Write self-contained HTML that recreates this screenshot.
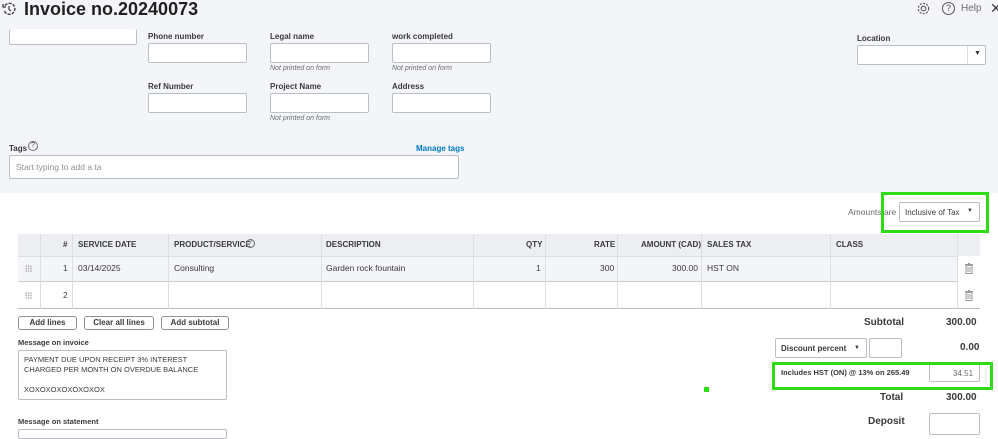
<!DOCTYPE html>
<html><head><meta charset="utf-8"><style>
*{box-sizing:border-box;margin:0;padding:0}
body{width:998px;height:433px;overflow:hidden;position:relative;background:#fff;font-family:"Liberation Sans",sans-serif;color:#393a3d}
.a{position:absolute}
.top{left:0;top:0;width:998px;height:193px;background:#f4f5f8}
.inp{position:absolute;background:#fff;border:1px solid #babec5;border-radius:2px}
.lbl{position:absolute;font-size:8px;font-weight:bold;color:#393a3d}
.np{position:absolute;font-size:7px;font-style:italic;color:#6b6c72}
.th{position:absolute;font-size:8px;font-weight:bold;top:240px}
.td{position:absolute;font-size:8.5px;top:263px}
.vl{position:absolute;width:1px;background:#dcdee2;top:234px;height:75px}
.btn{position:absolute;top:316px;height:14px;border:1px solid #8d9096;border-radius:3px;font-size:8px;font-weight:bold;text-align:center;line-height:12px;background:#fff}
.g{position:absolute;border:3px solid #2ddc12}
.dots{position:absolute;width:7px;height:7px;background:radial-gradient(circle,#999 0.6px,transparent 0.8px) 0 0/2.4px 2.4px}
</style></head><body>
<div class="a top"></div>
<svg class="a" style="left:2px;top:2px" width="14" height="14" viewBox="0 0 14 14"><path d="M3 3.5A5.5 5.5 0 1 1 2 8" fill="none" stroke="#393a3d" stroke-width="1.4" stroke-dasharray="3 1.2"/><path d="M1 2v3h3" fill="none" stroke="#393a3d" stroke-width="1.3"/><path d="M7 4v3.5l2 1.5" fill="none" stroke="#393a3d" stroke-width="1.2"/></svg>
<div class="a" style="left:24px;top:-1px;font-size:18px;font-weight:bold;color:#222">Invoice no.20240073</div>
<svg class="a" style="left:916px;top:1px" width="15" height="15" viewBox="0 0 16 16"><circle cx="8" cy="8" r="2.5" fill="none" stroke="#555" stroke-width="1.2"/><circle cx="8" cy="8" r="5.5" fill="none" stroke="#555" stroke-width="1.2" stroke-dasharray="2.2 1.4"/></svg>
<div class="a" style="left:942px;top:2px;width:13px;height:13px;border:1.3px solid #555;border-radius:50%;font-size:9px;text-align:center;line-height:11px;color:#555">?</div>
<div class="a" style="left:961px;top:3px;font-size:10px;color:#6b6c72">Help</div>
<div class="a" style="left:990px;top:0px;font-size:14px;color:#393a3d">✕</div>

<div class="inp" style="left:9px;top:29px;width:128px;height:16px;border-top:none"></div>
<div class="lbl" style="left:148px;top:32px">Phone number</div>
<div class="inp" style="left:148px;top:43px;width:99px;height:20px"></div>
<div class="lbl" style="left:270px;top:32px">Legal name</div>
<div class="inp" style="left:270px;top:43px;width:99px;height:20px"></div>
<div class="np" style="left:270px;top:65px">Not printed on form</div>
<div class="lbl" style="left:392px;top:32px">work completed</div>
<div class="inp" style="left:392px;top:43px;width:99px;height:20px"></div>
<div class="np" style="left:392px;top:65px">Not printed on form</div>
<div class="lbl" style="left:148px;top:82px">Ref Number</div>
<div class="inp" style="left:148px;top:93px;width:99px;height:20px"></div>
<div class="lbl" style="left:270px;top:82px">Project Name</div>
<div class="inp" style="left:270px;top:93px;width:99px;height:20px"></div>
<div class="np" style="left:270px;top:115px">Not printed on form</div>
<div class="lbl" style="left:392px;top:82px">Address</div>
<div class="inp" style="left:392px;top:93px;width:99px;height:20px"></div>
<div class="lbl" style="left:857px;top:34px">Location</div>
<div class="inp" style="left:857px;top:45px;width:129px;height:20px"></div>
<div class="a" style="left:967px;top:46px;width:1px;height:18px;background:#dcdee2"></div>
<div class="a" style="left:974px;top:50px;font-size:7px">▼</div>

<div class="lbl" style="left:9px;top:144px">Tags</div>
<div class="a" style="left:28px;top:141px;width:10px;height:10px;border:1px solid #6b6c72;border-radius:50%;font-size:7px;text-align:center;line-height:8px">?</div>
<div class="a" style="left:416px;top:144px;font-size:8px;font-weight:bold;color:#0077c5">Manage tags</div>
<div class="inp" style="left:9px;top:155px;width:450px;height:24px"></div>
<div class="a" style="left:16px;top:162px;font-size:8.5px;color:#8d9096">Start typing to add a ta</div>

<div class="a" style="left:848px;top:207px;font-size:8.5px;color:#6b6c72">Amounts are</div>
<div class="inp" style="left:899px;top:202px;width:81px;height:20px"></div>
<div class="a" style="left:905px;top:208px;font-size:8px">Inclusive of Tax</div>
<div class="a" style="left:967px;top:208px;font-size:6px">▼</div>
<div class="g" style="left:881px;top:192px;width:108px;height:41px"></div>

<div class="a" style="left:18px;top:234px;width:962px;height:22px;background:#eceef1"></div>
<div class="a" style="left:18px;top:256px;width:939px;height:26px;background:#f4f5f8;border-top:1px solid #dcdee2;border-bottom:1px solid #c9ccd1"></div>
<div class="a" style="left:18px;top:308px;width:962px;height:1px;background:#b8bbc1"></div>
<div class="vl" style="left:40px"></div><div class="vl" style="left:72px"></div><div class="vl" style="left:168px"></div><div class="vl" style="left:321px"></div><div class="vl" style="left:473px"></div><div class="vl" style="left:545px"></div><div class="vl" style="left:617px"></div><div class="vl" style="left:701px"></div><div class="vl" style="left:830px"></div><div class="vl" style="left:957px"></div>
<div class="th" style="left:63px">#</div>
<div class="th" style="left:78px">SERVICE DATE</div>
<div class="th" style="left:174px">PRODUCT/SERVICE</div>
<div class="a" style="left:246px;top:239px;width:9px;height:9px;border:1px solid #6b6c72;border-radius:50%;font-size:6px;text-align:center;line-height:7px;color:#6b6c72">?</div>
<div class="th" style="left:326px">DESCRIPTION</div>
<div class="th" style="left:526px">QTY</div>
<div class="th" style="left:594px">RATE</div>
<div class="th" style="left:641px">AMOUNT (CAD)</div>
<div class="th" style="left:707px">SALES TAX</div>
<div class="th" style="left:836px">CLASS</div>
<div class="dots" style="left:25px;top:265px"></div>
<div class="td" style="left:63px">1</div>
<div class="td" style="left:78px">03/14/2025</div>
<div class="td" style="left:174px">Consulting</div>
<div class="td" style="left:326px">Garden rock fountain</div>
<div class="td" style="left:536px">1</div>
<div class="td" style="left:600px">300</div>
<div class="td" style="left:672px">300.00</div>
<div class="td" style="left:707px">HST ON</div>
<svg class="a" style="left:965px;top:263px" width="8" height="11" viewBox="0 0 8 11"><path d="M0 1.5h8M3 0.5h2M1 2.5h6v8H1z M3 4v5M5 4v5" fill="none" stroke="#999" stroke-width="1"/></svg>
<div class="dots" style="left:25px;top:292px"></div>
<div class="td" style="left:63px;top:290px">2</div>
<svg class="a" style="left:965px;top:290px" width="8" height="11" viewBox="0 0 8 11"><path d="M0 1.5h8M3 0.5h2M1 2.5h6v8H1z M3 4v5M5 4v5" fill="none" stroke="#999" stroke-width="1"/></svg>

<div class="btn" style="left:18px;width:59px">Add lines</div>
<div class="btn" style="left:84px;width:70px">Clear all lines</div>
<div class="btn" style="left:161px;width:68px">Add subtotal</div>
<div class="lbl" style="left:18px;top:338px;font-size:7.5px">Message on invoice</div>
<div class="inp" style="left:18px;top:350px;width:209px;height:50px"></div>
<div class="a" style="left:24px;top:355px;font-size:7.5px;line-height:10px">PAYMENT DUE UPON RECEIPT 3% INTEREST<br>CHARGED PER MONTH ON OVERDUE BALANCE<br><br>XOXOXOXOXOXOXOX</div>
<div class="lbl" style="left:18px;top:417px;font-size:7.5px">Message on statement</div>
<div class="inp" style="left:18px;top:429px;width:209px;height:10px"></div>

<div class="a" style="left:864px;top:317px;font-size:10px;font-weight:bold">Subtotal</div>
<div class="a" style="left:946px;top:317px;font-size:10px;font-weight:bold">300.00</div>
<div class="inp" style="left:775px;top:338px;width:92px;height:20px"></div>
<div class="a" style="left:781px;top:344px;font-size:8px;font-weight:bold">Discount percent</div>
<div class="a" style="left:854px;top:345px;font-size:6px">▼</div>
<div class="inp" style="left:869px;top:338px;width:33px;height:20px"></div>
<div class="a" style="left:960px;top:342px;font-size:10px;font-weight:bold">0.00</div>
<div class="a" style="left:781px;top:368px;font-size:7.5px;font-weight:bold">Includes HST (ON) @ 13% on 265.49</div>
<div class="inp" style="left:929px;top:364px;width:51px;height:18px"></div>
<div class="a" style="left:953px;top:369px;font-size:8px;color:#6b6c72">34.51</div>
<div class="g" style="left:772px;top:362px;width:221px;height:28px"></div>
<div class="a" style="left:704px;top:387px;width:5px;height:5px;background:#2ddc12"></div>
<div class="a" style="left:880px;top:392px;font-size:10px;font-weight:bold">Total</div>
<div class="a" style="left:946px;top:392px;font-size:10px;font-weight:bold">300.00</div>
<div class="a" style="left:868px;top:416px;font-size:10px;font-weight:bold">Deposit</div>
<div class="inp" style="left:929px;top:413px;width:51px;height:22px"></div>
</body></html>
